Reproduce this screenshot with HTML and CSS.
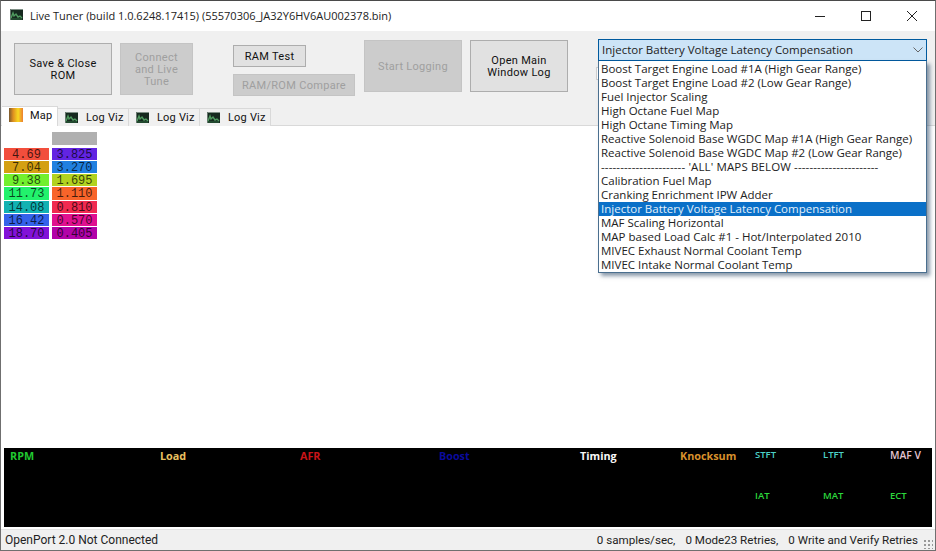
FILE: index.html
```html
<!DOCTYPE html>
<html>
<head>
    <title>Live Tuner</title>
    <link rel="stylesheet" href="styles.css">
</head>
<body>
    <svg class="defs" width="0" height="0">
        <symbol id="logviz" viewBox="0 0 13 11">
            <rect width="13" height="11" fill="#16291f"/>
            <rect x="0" y="0" width="13" height="1" fill="#7f8f86"/>
            <rect x="0" y="0" width="1" height="11" fill="#66766d"/>
            <path d="M1 9 L3 4 L4 7 L6 5 L8 8 L10 7 L12 9" fill="none" stroke="#4f9a5f" stroke-width="1.4"/>
            <path d="M1 10 H12" stroke="#2f6a40" stroke-width="1"/>
        </symbol>
    </svg>
    <div class="window">
        <!-- title bar -->
        <div class="titlebar">
            <svg class="title-icon" width="13" height="11"><use href="#logviz"/></svg>
            <span class="title-text">Live Tuner (build 1.0.6248.17415) (55570306_JA32Y6HV6AU002378.bin)</span>
            <div class="win-buttons">
                <svg width="12" height="12" viewBox="0 0 12 12"><path d="M1 6.5 H11" stroke="#222" stroke-width="1"/></svg>
                <svg width="12" height="12" viewBox="0 0 12 12"><rect x="1.5" y="1.5" width="9" height="9" fill="none" stroke="#222" stroke-width="1"/></svg>
                <svg width="12" height="12" viewBox="0 0 12 12"><path d="M1 1 L11 11 M11 1 L1 11" stroke="#222" stroke-width="1"/></svg>
            </div>
        </div>

        <!-- toolbar -->
        <div class="toolbar">
            <button class="btn btn-big save-btn">Save &amp; Close<br>ROM</button>
            <button class="btn btn-off connect-btn">Connect<br>and Live<br>Tune</button>
            <div class="ram-group">
                <button class="btn ram-test">RAM Test</button>
                <button class="btn btn-off ram-compare">RAM/ROM Compare</button>
            </div>
            <button class="btn btn-off btn-big log-btn">Start Logging</button>
            <button class="btn btn-big log-btn window-log">Open Main<br>Window Log</button>
            <div class="combo-wrap">
                <div class="hidden-edge"></div>
                <div class="combo">
                    <span>Injector Battery Voltage Latency Compensation</span>
                    <svg width="10" height="6" viewBox="0 0 10 6"><path d="M0.5 0.5 L5 5 L9.5 0.5" fill="none" stroke="#666" stroke-width="1"/></svg>
                </div>
                <ul class="combo-list">
                    <li>Boost Target Engine Load #1A (High Gear Range)</li>
                    <li>Boost Target Engine Load #2 (Low Gear Range)</li>
                    <li>Fuel Injector Scaling</li>
                    <li>High Octane Fuel Map</li>
                    <li>High Octane Timing Map</li>
                    <li>Reactive Solenoid Base WGDC Map #1A (High Gear Range)</li>
                    <li>Reactive Solenoid Base WGDC Map #2 (Low Gear Range)</li>
                    <li class="divider">---------------------- 'ALL' MAPS BELOW ----------------------</li>
                    <li>Calibration Fuel Map</li>
                    <li>Cranking Enrichment IPW Adder</li>
                    <li class="selected">Injector Battery Voltage Latency Compensation</li>
                    <li>MAF Scaling Horizontal</li>
                    <li>MAP based Load Calc #1 - Hot/Interpolated 2010</li>
                    <li>MIVEC Exhaust Normal Coolant Temp</li>
                    <li>MIVEC Intake Normal Coolant Temp</li>
                </ul>
            </div>
        </div>

        <!-- tabs -->
        <div class="tabs">
            <div class="tab active"><span class="map-icon"></span>Map</div>
            <div class="tab"><svg width="13" height="11"><use href="#logviz"/></svg>Log Viz</div>
            <div class="tab"><svg width="13" height="11"><use href="#logviz"/></svg>Log Viz</div>
            <div class="tab"><svg width="13" height="11"><use href="#logviz"/></svg>Log Viz</div>
        </div>

        <!-- map table -->
        <div class="content">
            <div class="map-table">
                <div class="cell-head"></div>
                <div class="map-cols">
                    <div class="map-col">
                        <div class="cell c-red">4.69</div>
                        <div class="cell c-gold">7.04</div>
                        <div class="cell c-lime">9.38</div>
                        <div class="cell c-green">11.73</div>
                        <div class="cell c-teal">14.08</div>
                        <div class="cell c-blue">16.42</div>
                        <div class="cell c-violet">18.70</div>
                    </div>
                    <div class="map-col">
                        <div class="cell c-indigo">3.825</div>
                        <div class="cell c-sky">3.270</div>
                        <div class="cell c-olive">1.695</div>
                        <div class="cell c-orange">1.110</div>
                        <div class="cell c-rose">0.810</div>
                        <div class="cell c-pink">0.570</div>
                        <div class="cell c-magenta">0.405</div>
                    </div>
                </div>
            </div>
        </div>

        <!-- gauges -->
        <div class="gauges">
            <span class="g-big g-rpm">RPM</span>
            <span class="g-big g-load">Load</span>
            <span class="g-big g-afr">AFR</span>
            <span class="g-big g-boost">Boost</span>
            <span class="g-big g-timing">Timing</span>
            <span class="g-big g-knock">Knocksum</span>
            <span class="g-small g-col7 g-trim">STFT</span>
            <span class="g-small g-col8 g-trim">LTFT</span>
            <span class="g-small g-col9 g-maf">MAF V</span>
            <span class="g-small g-col7 g-row2 g-temp">IAT</span>
            <span class="g-small g-col8 g-row2 g-temp">MAT</span>
            <span class="g-small g-col9 g-row2 g-temp">ECT</span>
        </div>

        <!-- status bar -->
        <div class="statusbar">
            <span>OpenPort 2.0 Not Connected</span>
            <div class="status-right">
                <span>0 samples/sec,</span>
                <span>0 Mode23 Retries,</span>
                <span>0 Write and Verify Retries</span>
            </div>
            <span class="grip"></span>
        </div>
    </div>
</body>
</html>
```

FILE: styles.css
```css
html, body {
    margin: 0;
    height: 100%;
    overflow: hidden;
}

body {
    font-family: "Open Sans", "Noto Sans", Arial, sans-serif;
    color: #111;
}

.defs {
    position: absolute;
}

.window {
    box-sizing: border-box;
    width: 936px;
    height: 551px;
    display: flex;
    flex-direction: column;
    background: #fff;
    border: 1px solid #6f6f6f;
    border-top-color: #4a4a4a;
}

/* title bar */
.titlebar {
    height: 30px;
    flex: none;
    display: flex;
    align-items: center;
    padding-left: 9px;
    background: #fff;
}

.title-icon {
    margin-top: -3px;
}

.title-text {
    margin-left: 7px;
    font-size: 11px;
    margin-top: -1px;
    color: #222;
}

.win-buttons {
    margin-left: auto;
    display: flex;
    gap: 34px;
    padding-right: 17px;
}

/* toolbar */
.toolbar {
    height: 76px;
    flex: none;
    display: flex;
    align-items: flex-start;
    background: #f0f0f0;
    padding-left: 13px;
}

.btn {
    box-sizing: border-box;
    display: block;
    margin: 0;
    padding: 2px 0 0;
    font-family: Roboto, Arial, sans-serif;
    font-size: 11px;
    line-height: 12px;
    letter-spacing: 0.3px;
    color: #111;
    background: #e1e1e1;
    border: 1px solid #adadad;
}

.btn-off {
    background: #cccccc;
    border-color: #c4c4c4;
    color: #9f9f9f;
}

.btn-big {
    width: 98px;
    height: 52px;
}

.save-btn {
    margin-top: 12px;
}

.connect-btn {
    width: 73px;
    height: 52px;
    margin: 12px 0 0 8px;
}

.ram-group {
    margin: 14px 0 0 40px;
    display: flex;
    flex-direction: column;
    gap: 7px;
}

.ram-test {
    width: 73px;
    height: 22px;
}

.ram-compare {
    width: 122px;
    height: 22px;
}

.log-btn {
    margin: 9px 0 0 9px;
}

.window-log {
    margin-left: 8px;
}

/* combo */
.combo-wrap {
    position: relative;
    width: 329px;
    margin: 8px 0 0 30px;
}

.hidden-edge {
    position: absolute;
    left: -2px;
    top: 28px;
    width: 4px;
    height: 11px;
    background: #fff;
    border: 1px solid #d0d0d0;
}

.combo {
    box-sizing: border-box;
    position: relative;
    height: 22px;
    display: flex;
    align-items: center;
    justify-content: space-between;
    padding: 0 3px 1px 3px;
    background: #cce4f7;
    border: 1px solid #005a9e;
    font-size: 11.5px;
    color: #222;
}

.combo-list {
    box-sizing: border-box;
    position: absolute;
    top: 22px;
    left: 0;
    width: 329px;
    margin: 0;
    padding: 1px 0 0;
    list-style: none;
    background: #fff;
    border: 1px solid #4a6f8f;
    border-top: none;
    box-shadow: 3px 3px 4px rgba(40, 70, 100, 0.55);
    font-size: 11.5px;
    z-index: 2;
}

.combo-list li {
    height: 14px;
    line-height: 14px;
    padding-left: 2px;
    white-space: nowrap;
    color: #222;
}

.combo-list .divider {
    letter-spacing: 0.13px;
}

.combo-list .selected {
    background: #0a70c8;
    color: #e4f0fa;
}

/* tabs */
.tabs {
    height: 18px;
    flex: none;
    display: flex;
    align-items: flex-end;
    background: #f0f0f0;
    border-bottom: 1px solid #d9d9d9;
    padding-left: 1px;
}

.tab {
    box-sizing: border-box;
    width: 71px;
    height: 18px;
    display: flex;
    align-items: center;
    gap: 8px;
    padding: 0 0 1px 7px;
    font-family: Roboto, Arial, sans-serif;
    font-size: 11px;
    letter-spacing: 0.2px;
    background: #f0f0f0;
    border: 1px solid #d9d9d9;
    border-bottom: none;
    border-left: none;
    margin-bottom: -1px;
}

.tab.active {
    width: 56px;
    height: 20px;
    background: #fff;
    padding: 0 0 3px 7px;
    gap: 7px;
}

.map-icon {
    width: 14px;
    height: 14px;
    background: linear-gradient(90deg, #7a5a30, #e09020 30%, #f8d820 65%, #ec8030);
}

/* map table */
.content {
    flex: 1;
    min-height: 0;
    background: #fff;
    padding: 6px 0 0 3px;
}

.map-table {
    width: 93px;
}

.cell-head {
    width: 45px;
    height: 13px;
    margin-left: 48px;
    margin-bottom: 3px;
    background: #b0b0b0;
}

.map-cols {
    display: flex;
    gap: 3px;
}

.map-col {
    width: 45px;
}

.cell {
    box-sizing: border-box;
    height: 13.15px;
    line-height: 14px;
    border-bottom: 1px solid #fff;
    font-family: "Liberation Mono", monospace;
    font-size: 12px;
    text-align: center;
    color: rgba(0, 0, 0, 0.72);
}

.c-red { background: #f24e3c; }
.c-gold { background: #d4a012; }
.c-lime { background: #72f02e; }
.c-green { background: #22f26c; }
.c-teal { background: #12b2b2; }
.c-blue { background: #3462ea; }
.c-violet { background: #8212d8; }
.c-indigo { background: #6224e2; }
.c-sky { background: #2080e0; }
.c-olive { background: #b2d220; }
.c-orange { background: #f8642a; }
.c-rose { background: #f02a50; }
.c-pink { background: #e01090; }
.c-magenta { background: #b202a8; }

/* gauges */
.gauges {
    flex: none;
    height: 79px;
    margin: 0 3px;
    background: #000;
    display: grid;
    grid-template-columns: 150px 140px 139px 141px 100px 75px 68px 67px 1fr;
    grid-template-rows: 41px 38px;
    padding-left: 6px;
    font-size: 10.8px;
    font-weight: 700;
}

.g-big {
    grid-row: 1;
}

.g-small {
    grid-row: 1;
    font-size: 9.5px;
    font-weight: 600;
}

.g-col7 { grid-column: 7; }
.g-col8 { grid-column: 8; }
.g-col9 { grid-column: 9; }
.g-small.g-row2 { grid-row: 2; }

.g-rpm { color: #20c830; }
.g-load { color: #e8c060; }
.g-afr { color: #c81418; }
.g-boost { color: #0a0a9c; }
.g-timing { color: #f8f8f8; }
.g-knock { color: #d8902c; }
.g-trim { color: #4cd0c8; }
.g-small.g-maf { color: #e4c4d0; font-size: 10.3px; }
.g-temp { color: #2cd83c; }

/* status bar */
.statusbar {
    flex: none;
    height: 21px;
    margin-top: 2px;
    display: flex;
    align-items: center;
    padding: 0 0 0 4px;
    box-sizing: border-box;
    background: #f0f0f0;
    font-family: Roboto, Arial, sans-serif;
    font-size: 12px;
    color: #222;
    border-top: 1px solid #e4e4e4;
}

.status-right {
    margin-left: auto;
    display: flex;
    gap: 10px;
    font-size: 11.6px;
}

.grip {
    width: 10px;
    height: 10px;
    margin: 7px 2px 0 5px;
    background: radial-gradient(circle, #999 1px, transparent 1px) 0 0 / 4px 4px;
}
```
